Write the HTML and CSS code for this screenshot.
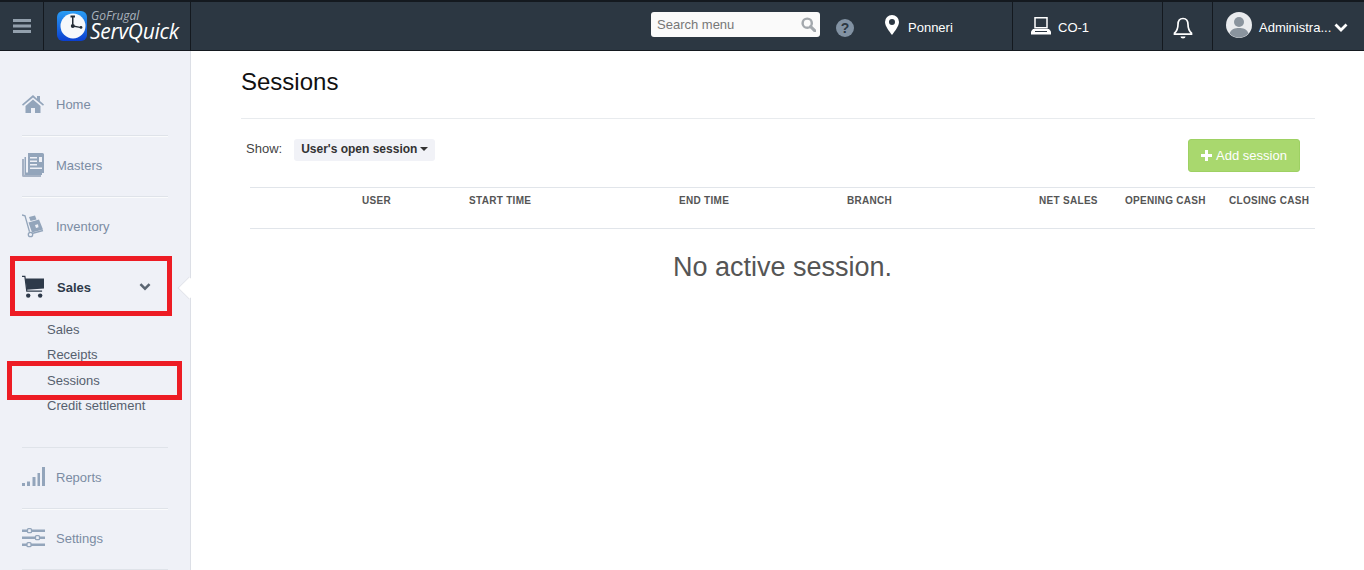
FILE: index.html
```html
<!DOCTYPE html>
<html lang="en">
<head>
<meta charset="utf-8">
<title>Sessions</title>
<link rel="stylesheet" href="styles.css">
</head>
<body>
<header class="topbar">
  <div class="cell menu-cell">
    <svg class="burger" viewBox="0 0 18 14"><path d="M0 0h18v3H0zM0 5.5h18v3H0zM0 11h18v3H0z"/></svg>
  </div>
  <div class="cell logo-cell">
    <svg class="logo" viewBox="0 0 30 30">
      <defs><linearGradient id="lg" x1="0" y1="0" x2="0" y2="1"><stop offset="0" stop-color="#2a9df4"/><stop offset="1" stop-color="#0a3fd0"/></linearGradient></defs>
      <rect width="30" height="30" rx="6" fill="url(#lg)"/>
      <circle cx="16" cy="15" r="12.5" fill="#f6f8fb"/>
      <path d="M13.500 4.500h4.500v2h-1.500v7h-1.500v-7h-1.500z" fill="#222a35"/>
      <path d="M16 14.200l7 1.600v1.200l-7-1.200z" fill="#222a35"/>
      <circle cx="15.800" cy="15" r="2" fill="#222a35"/>
      <circle cx="24" cy="16.400" r="1.400" fill="#222a35"/>
    </svg>
    <div class="brand">
      <span class="brand-top">GoFrugal</span>
      <span class="brand-main">ServQuick</span>
    </div>
  </div>
  <div class="top-right">
    <div class="search">
      <span class="search-text">Search menu</span>
      <svg class="search-icon" viewBox="0 0 14 14"><circle cx="5.800" cy="5.800" r="4.300" fill="none" stroke="#a3a8ad" stroke-width="2.300"/><path d="M9 9l4 4" stroke="#a3a8ad" stroke-width="2.800" stroke-linecap="round"/></svg>
    </div>
    <svg class="help" viewBox="0 0 18 18"><circle cx="9" cy="9" r="9" fill="#8292a3"/><text x="9" y="14" text-anchor="middle" class="help-q">?</text></svg>
    <div class="place">
      <svg class="pin" viewBox="0 0 14 20"><path fill-rule="evenodd" d="M7 0a7 7 0 0 1 7 7c0 4-4 9-7 13C4 16 0 11 0 7a7 7 0 0 1 7-7zm0 4a3 3 0 1 0 0 6 3 3 0 0 0 0-6z" fill="#fff"/></svg>
      <span>Ponneri</span>
    </div>
    <div class="cell-l counter">
      <svg class="pos" viewBox="0 0 21 18"><path d="M4 0.800h12v10H4z" fill="none" stroke="#fff" stroke-width="1.500"/><path d="M2 12h16l2 2.500v3H0v-3z" fill="#fff"/><path d="M4 14.500h12" stroke="#2c3742"/></svg>
      <span>CO-1</span>
    </div>
    <div class="cell-l bell-cell">
      <svg class="bell" viewBox="0 0 20 22"><path d="M10 1.500c-3.500 0-5 2.800-5 6 0 4-1.200 6.500-3.500 8.700v1h17v-1C16.200 14 15 11.500 15 7.500c0-3.200-1.500-6-5-6z" fill="none" stroke="#fff" stroke-width="1.700"/><path d="M7.500 19.500a2.500 2 0 0 0 5 0z" fill="#fff"/></svg>
    </div>
    <div class="cell-l user">
      <svg class="avatar" viewBox="0 0 26 26"><circle cx="13" cy="13" r="13" fill="#e9ebee"/><circle cx="13" cy="10" r="5" fill="#8a949e"/><path d="M3.500 21.500C5 17 9 16 13 16s8 1 9.500 5.500a13 13 0 0 1-19 0z" fill="#8a949e"/></svg>
      <span class="user-name">Administra...</span>
      <svg class="user-chev" viewBox="0 0 14 9"><path d="M1.500 1.500L7 7l5.500-5.500" fill="none" stroke="#fff" stroke-width="2.800"/></svg>
    </div>
  </div>
</header>

<div class="layout">
  <aside class="sidebar">
    <a class="nav-item">
      <svg class="nav-icon" viewBox="0 0 22 18"><path d="M11 0L0 9.500l1 1.200L11 2.500l10 8.200 1-1.200-4-3.500V1h-3v2.700z" fill="#93a5bb"/><path d="M3.500 11L11 4.500l7.500 6.500v7H13v-5H9v5H3.500z" fill="#93a5bb"/></svg>
      <span>Home</span>
    </a>
    <a class="nav-item">
      <svg class="nav-icon" viewBox="0 0 22 24"><path d="M0 6h2v15.500h17V24H1.500A1.500 1.500 0 0 1 0 22.500z" fill="#a6b2c4"/><path d="M2.500 4h1.500v15.500h16V22H4a1.500 1.500 0 0 1-1.500-1.500z" fill="#93a5bb"/><path fill-rule="evenodd" d="M6 0h14.500A1.500 1.500 0 0 1 22 1.500V20H6zm2 4v1.500h7V4zm0 3.500V9h7V7.500zm0 3.500v1.500h7V11zm9-7v5h3V4zM8 14.500V16h12v-1.500z" fill="#93a5bb"/></svg>
      <span>Masters</span>
    </a>
    <a class="nav-item">
      <svg class="nav-icon" viewBox="0 0 22 24"><path d="M0 1l3 .8 4.500 16" fill="none" stroke="#93a5bb" stroke-width="1.300"/><circle cx="8.500" cy="20.500" r="2.200" fill="none" stroke="#93a5bb" stroke-width="1.300"/><path d="M10 19.500l11-3" stroke="#93a5bb" stroke-width="1.300"/><path d="M7 3l6-1.500 1.500 4-6 1.500z" fill="#93a5bb"/><path d="M6.500 8.500L17 5.500l4 10-11 3z" fill="#93a5bb"/><path d="M13 11l3-.8.500 3-2.500.7z" fill="#eff1f7"/></svg>
      <span>Inventory</span>
    </a>
    <div class="nav-group">
      <a class="nav-item active">
        <svg class="nav-icon" viewBox="0 0 23 24"><path d="M0 0.800h3l2 15.500h16" fill="none" stroke="#2e3a4a" stroke-width="1.300"/><path d="M3.600 3H23v10.500L5 15z" fill="#2e3a4a"/><circle cx="6.500" cy="21" r="2.300" fill="#2e3a4a"/><circle cx="19" cy="21" r="2.300" fill="#2e3a4a"/></svg>
        <span>Sales</span>
        <svg class="nav-chev" viewBox="0 0 10 7"><path d="M1 1l4 4 4-4" fill="none" stroke="#5b6672" stroke-width="2.200"/></svg>
      </a>
      <ul class="subnav">
        <li>Sales</li>
        <li>Receipts</li>
        <li>Sessions</li>
        <li>Credit settlement</li>
      </ul>
    </div>
    <a class="nav-item">
      <svg class="nav-icon wide" viewBox="0 0 23 20"><path d="M0 16h3v3H0zM5 14.500h3V19H5zM10.500 10h3v9h-3zM15.500 6h2.500v13h-2.500zM20 0h3v19h-3z" fill="#93a5bb"/></svg>
      <span>Reports</span>
    </a>
    <a class="nav-item last">
      <svg class="nav-icon wide" viewBox="0 0 23 20"><path d="M0 1.500h23v2.500H0zM0 8.500h23v2.500H0zM0 15.500h23v2.500H0z" fill="#93a5bb"/><g fill="#eff1f7" stroke="#93a5bb" stroke-width="1.300"><rect x="5.500" y="0.700" width="4" height="4" rx="1"/><rect x="13.500" y="7.700" width="4" height="4" rx="1"/><rect x="5" y="14.700" width="4" height="4" rx="1"/></g></svg>
      <span>Settings</span>
    </a>
    <div class="notch"></div>
  </aside>

  <main class="content">
    <h1>Sessions</h1>
    <div class="toolbar">
      <div class="show">
        <span class="show-label">Show:</span>
        <span class="dropdown">User's open session<i class="caret"></i></span>
      </div>
      <button class="add-btn"><svg class="plus" viewBox="0 0 11 11"><path d="M4 0h3v4h4v3H7v4H4V7H0V4h4z" fill="#fff"/></svg>Add session</button>
    </div>
    <div class="table-head">
      <span></span>
      <span>USER</span>
      <span>START TIME</span>
      <span>END TIME</span>
      <span>BRANCH</span>
      <span>NET SALES</span>
      <span>OPENING CASH</span>
      <span>CLOSING CASH</span>
    </div>
    <p class="empty">No active session.</p>
  </main>
</div>

<div class="mark mark-sales"></div>
<div class="mark mark-sessions"></div>
</body>
</html>
```

FILE: styles.css
```css
* { box-sizing: border-box; }
html, body { margin: 0; height: 100%; overflow: hidden; }
body { font-family: "Liberation Sans", Arial, sans-serif; background: #fff; color: #333; }

.topbar {
  display: flex;
  height: 51px;
  background: #2c3742;
  border-top: 2px solid #14191f;
  border-bottom: 1px solid #14191f;
}
.cell { display: flex; align-items: center; border-right: 1px solid #14191f; }
.menu-cell { width: 44px; justify-content: center; }
.burger { width: 18px; height: 14px; fill: #93a0ad; }
.logo-cell { width: 147px; padding-left: 13px; gap: 3px; }
.logo { width: 30px; height: 30px; flex: none; }
.brand { display: flex; flex-direction: column; font-family: "Open Sans", sans-serif; font-style: italic; color: #fff; }
.brand-top { font-size: 12px; line-height: 11px; color: #a9b2bc; margin-left: 1px; }
.brand-main { font-size: 21px; line-height: 21px; letter-spacing: -0.3px; }

.top-right { flex: 1; display: flex; align-items: center; padding-left: 460px; color: #fff; font-size: 13px; }
.search {
  width: 169px; height: 25px;
  margin-top: -3px;
  padding: 0 4px 0 6px;
  background: #fafafa;
  border-radius: 3px;
  display: flex; align-items: center; justify-content: space-between;
  color: #777;
  font-size: 13px;
}
.search-icon { width: 15px; height: 15px; }
.help { width: 18px; height: 18px; margin-left: 16px; margin-top: 4px; }
.help-q { font: bold 14px "Liberation Sans", sans-serif; fill: #2c3742; }
.place { display: flex; align-items: center; width: 158px; padding-left: 31px; gap: 9px; margin-top: 2px; }
.pin { width: 14px; height: 20px; margin-top: -4px; }
.cell-l { display: flex; align-items: center; height: 100%; padding-top: 2px; border-left: 1px solid #14191f; }
.counter { width: 150px; padding-left: 18px; gap: 6px; font-size: 13px; }
.pos { width: 21px; height: 18px; margin-top: -3px; }
.bell-cell { width: 50px; padding-left: 10px; }
.bell { width: 20px; height: 22px; margin-top: 2px; }
.user { flex: 1; padding-left: 13px; font-size: 13px; }
.avatar { width: 26px; height: 26px; flex: none; margin-top: -4px; }
.user-name { margin-left: 7px; }
.user-chev { width: 14px; height: 9px; margin-left: 3px; }

.layout { display: flex; height: 519px; }
.sidebar {
  position: relative;
  width: 191px;
  flex: none;
  background: #eff1f7;
  border-right: 1px solid #dcdfe6;
  padding: 24px 22px 0;
}
.nav-item {
  display: flex; align-items: center;
  height: 61px;
  padding-bottom: 2px;
  border-bottom: 1px solid #dfe3e9;
  box-shadow: 0 1px 0 #fafbfc;
  color: #7b8ca3;
  font-size: 13px;
  gap: 12px;
}
.nav-item span { flex: none; }
.nav-icon { width: 22px; height: 24px; flex: none; }
.nav-icon.wide { width: 23px; height: 20px; margin-right: -1px; }
.nav-group { border-bottom: 1px solid #dfe3e9; height: 190px; }
.active { height: 59px; padding-bottom: 1px; border-bottom: none; box-shadow: none; color: #2e3a4a; font-weight: bold; gap: 13px; }
.nav-chev { width: 12px; height: 8px; margin-left: 35px; }
.subnav { list-style: none; margin: 0; padding: 0 0 0 25px; color: #56606e; font-size: 13px; }
.subnav li { height: 25.4px; line-height: 25.4px; }
.last { box-shadow: none; }
.notch {
  position: absolute;
  left: 179px; top: 227px;
  width: 20px; height: 20px;
  background: #fff;
  border-left: 1px solid #dcdfe6;
  border-bottom: 1px solid #dcdfe6;
  transform: rotate(45deg) scale(.8);
}

.content { flex: 1; padding: 0 49px 0 50px; }
h1 {
  margin: 0;
  height: 68px;
  padding-top: 18px;
  font-size: 24px; font-weight: normal; line-height: 26px; color: #111;
  border-bottom: 1px solid #e8ebee;
}
.toolbar { display: flex; justify-content: space-between; height: 68px; padding: 20px 15px 0 5px; }
.show { display: flex; align-items: flex-start; font-size: 13px; }
.show-label { margin-top: 2px; color: #444; line-height: 15px; }
.dropdown {
  margin-left: 12px;
  height: 22px; line-height: 21px;
  padding: 0 7px;
  background: #f1f2f7;
  border-radius: 3px;
  font-size: 12px; font-weight: bold; color: #333;
}
.caret {
  display: inline-block;
  margin-left: 3px; vertical-align: 2px;
  border-left: 4px solid transparent; border-right: 4px solid transparent; border-top: 4px solid #333;
}
.add-btn {
  width: 112px; height: 33px; padding: 0;
  background: #a9d86e;
  border: 1px solid #9ed163;
  border-radius: 3px;
  color: #fff;
  font: 13px "Liberation Sans", sans-serif;
  display: flex; align-items: center; justify-content: center; gap: 4px;
}
.plus { width: 11px; height: 11px; }

.table-head {
  display: grid;
  grid-template-columns: 112px 107px 210px 168px 192px 86px 104px 1fr;
  margin-left: 9px;
  height: 42px;
  padding-top: 6px;
  line-height: 14px;
  border-top: 1px solid #e1e5ea;
  border-bottom: 1px solid #e1e5ea;
  font-size: 10px; font-weight: bold; letter-spacing: .3px; color: #555;
}
.table-head span { white-space: nowrap; }
.empty { margin: 21px 0 0; text-align: center; padding-left: 9px; font-size: 27px; line-height: 34px; color: #555; }

.mark { position: absolute; border: 5px solid #ed1c24; }
.mark-sales { left: 10px; top: 256px; width: 162px; height: 60px; }
.mark-sessions { left: 7px; top: 361px; width: 175px; height: 39px; }
```
